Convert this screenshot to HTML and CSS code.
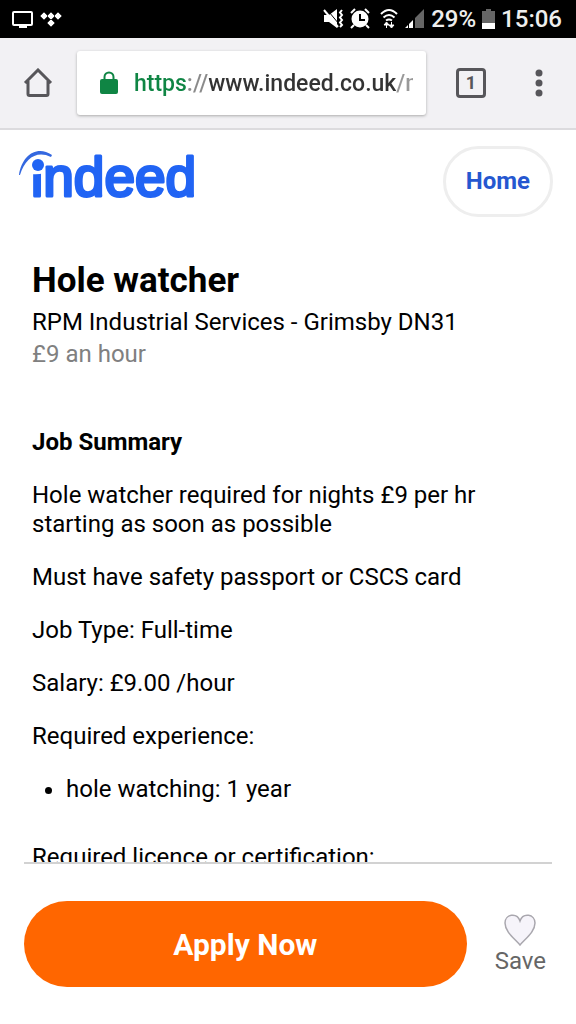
FILE: index.html
```html
<!DOCTYPE html>
<html lang="en-GB">
<head>
<meta charset="utf-8">
<meta name="viewport" content="width=device-width, initial-scale=1">
<title>Hole watcher - Indeed</title>
<link rel="stylesheet" href="styles.css">
</head>
<body>
<div class="status">
  <svg class="status-left" width="52" height="20" viewBox="0 0 52 20" aria-hidden="true">
    <rect x="1" y="3" width="19" height="13" rx="1" fill="none" stroke="#fff" stroke-width="2"/>
    <path d="M7 16h8v3H7z" fill="#fff"/>
    <path d="M32 3l4 4-4 4-4-4zM39 3l4 4-4 4-4-4zM46 3l4 4-4 4-4-4zM39 10l4 4-4 4-4-4z" fill="#fff" stroke="#000" stroke-width=".5"/>
  </svg>
  <div class="status-right">
    <svg width="102" height="22" viewBox="0 0 102 22" aria-hidden="true">
      <path d="M1 7h5l8-6v19l-8-6H1z" fill="#fff"/>
      <path d="M3.500 1L16 16" stroke="#000" stroke-width="1"/>
      <path d="M1 2l14 17" stroke="#fff" stroke-width="2"/>
      <path d="M19 2l-2 2.500 2 2.500-2 2.500 2 2.500-2 2.500 2 2.500-2 2" fill="none" stroke="#fff" stroke-width="2"/>
      <circle cx="37" cy="11" r="8.500" fill="#fff"/>
      <path d="M28 5l4-4M46 5l-4-4M31 17l-3 3M43 17l3 3" stroke="#fff" stroke-width="2"/>
      <path d="M37 6v6h5" fill="none" stroke="#000" stroke-width="2"/>
      <path d="M58 6q8-8 16 0M60.500 9.500q5.500-5 11 0M63 12.500q3-2 6 0" fill="none" stroke="#fff" stroke-width="2"/>
      <path d="M63.500 20v-3M61 17h5l-2.500-3zM68.500 14v3M66 17h5l-2.500 3z" stroke="#fff" fill="#fff"/>
      <path d="M92 10l9-9v19h-9z" fill="#666"/>
      <path d="M82 20l3-3v3zM86 16l4-4v8h-4z" fill="#fff"/>
    </svg>
    <span>29%</span>
    <svg class="battery" width="13" height="20" viewBox="0 0 13 20" aria-hidden="true">
      <path d="M4 0h5v2h4v12H0V2h4z" fill="#666"/><path d="M0 14h13v6H0z" fill="#fff"/>
    </svg>
    <span>15:06</span>
  </div>
</div>

<div class="toolbar">
  <button class="tool" aria-label="Home page">
    <svg width="30" height="30" viewBox="0 0 30 30"><path d="M2 15L15 2l13 13M5 13v13q0 1.500 1.500 1.500h17q1.500 0 1.500-1.500V13" fill="none" stroke="#57565a" stroke-width="3"/></svg>
  </button>
  <div class="address">
    <svg width="18" height="24" viewBox="0 0 18 24" aria-hidden="true"><rect y="8" width="18" height="15" rx="2" fill="#0f8544"/><path d="M4.500 9V6a4.500 4.500 0 0 1 9 0v3" fill="none" stroke="#0f8544" stroke-width="2"/></svg>
    <input class="url" type="text" aria-label="Address" value="https://www.indeed.co.uk/m">
  </div>
  <button class="tool tabs" aria-label="Open tabs"><span class="tab-count">1</span></button>
  <button class="tool" aria-label="Menu">
    <svg width="8" height="28" viewBox="0 0 8 28" fill="#57565a"><circle cx="4" cy="4" r="3.500"/><circle cx="4" cy="14" r="3.500"/><circle cx="4" cy="24" r="3.500"/></svg>
  </button>
</div>

<header class="site-header">
  <a class="logo" href="#">
    <svg width="180" height="60" viewBox="0 0 180 60">
      <text class="wordmark" x="12" y="50">indeed</text>
      <path d="M12 5h13v22q-6 2-13 1z" fill="#fff"/>
      <path d="M0 29C3 9 18-1 33 9L32 11C18 4 6 12 1 29z" fill="#3468e0"/>
      <circle cx="19" cy="19" r="6" fill="#2164f4"/>
    </svg>
  </a>
  <a class="home" href="#">Home</a>
</header>

<main class="job">
  <h1>Hole watcher</h1>
  <p class="meta">RPM Industrial Services - Grimsby DN31</p>
  <p class="meta pay">£9 an hour</p>
  <h2>Job Summary</h2>
  <p>Hole watcher required for nights £9 per hr starting as soon as possible</p>
  <p>Must have safety passport or CSCS card</p>
  <p>Job Type: Full-time</p>
  <p>Salary: £9.00 /hour</p>
  <p>Required experience:</p>
  <ul><li>hole watching: 1 year</li></ul>
  <p>Required licence or certification:</p>
</main>

<footer class="actions">
  <button class="apply">Apply Now</button>
  <button class="save">
    <svg width="34" height="34" viewBox="0 0 34 34" aria-hidden="true"><path d="M17 32C12 26 2 19 2 10 2 1 14-1 17 8 20-1 32 1 32 10c0 9-10 16-15 22z" fill="#f6f4fa" stroke="#a9a7ae" stroke-width="1.500"/></svg>
    <span>Save</span>
  </button>
</footer>
</body>
</html>
```
FILE: styles.css
```css
* { box-sizing: border-box; }
body {
  margin: 0;
  height: 100vh;
  display: flex;
  flex-direction: column;
  background: #fff;
  color: #000;
  font: 24px/29px Roboto, sans-serif;
}
button {
  border: 0;
  padding: 0;
  background: none;
  font: inherit;
  color: inherit;
}
svg { display: block; flex: none; }

.status {
  flex: none;
  height: 38px;
  padding: 0 14px 0 12px;
  display: flex;
  align-items: center;
  justify-content: space-between;
  background: #000;
  color: #eee;
  font-weight: 500;
}
.status-right { display: flex; align-items: center; gap: 6px; }

.toolbar {
  flex: none;
  height: 92px;
  padding: 0 22px 0 23px;
  display: flex;
  align-items: center;
  gap: 24px;
  background: #f2f1f4;
  border-bottom: 2px solid #dcdbde;
}
.tool { min-width: 30px; display: flex; justify-content: center; }
.tabs { margin-left: 6px; margin-right: 14px; }
.tab-count {
  width: 30px;
  height: 30px;
  border: 3px solid #57565a;
  border-radius: 4px;
  color: #57565a;
  font-size: 18px;
  font-weight: 700;
  line-height: 24px;
  text-align: center;
}
.address {
  flex: 1;
  min-width: 0;
  height: 64px;
  padding: 0 13px 0 23px;
  display: flex;
  align-items: center;
  gap: 16px;
  background: #fff;
  border-radius: 3px;
  box-shadow: 0 1px 3px #aaa;
}
.url {
  flex: 1;
  min-width: 0;
  border: 0;
  padding: 0;
  outline: 0;
  font: 500 23px/29px Roboto, sans-serif;
  color: transparent;
  caret-color: #333;
  background: linear-gradient(to right, #0f8544 53px, #8a8a8a 53px 75px, #333 75px 262px, #999 262px);
  -webkit-background-clip: text;
  background-clip: text;
}

.site-header {
  flex: none;
  height: 85px;
  padding: 16px 23px 0 19px;
  display: flex;
  align-items: flex-start;
  justify-content: space-between;
}
.wordmark {
  font: 400 55px "Liberation Sans", Arial, sans-serif;
  fill: #2164f4;
  stroke: #2164f4;
  stroke-width: 3px;
  stroke-linejoin: round;
}
.home {
  padding: 18px 20px;
  border: 3px solid #eee;
  border-radius: 36px;
  color: #2557d0;
  font-weight: 700;
  text-decoration: none;
}

.job {
  flex: 1;
  min-height: 0;
  overflow-y: auto;
  scrollbar-width: none;
  margin-top: 24px;
  padding: 20px 32px 0;
}
h1 { margin: 0 0 4px; font-size: 35px; line-height: 43px; }
h2 { margin: 58px 0 24px; font-size: 24px; line-height: 29px; }
p { margin: 0 0 24px; }
.meta { margin: 0; line-height: 32px; }
.pay { color: #808080; }
ul { margin: 0 0 39px; padding-left: 34px; }

.actions {
  flex: none;
  margin: 0 24px;
  padding: 37px 0;
  display: flex;
  align-items: center;
  border-top: 2px solid #d2d2d2;
}
.apply {
  flex: 1;
  height: 86px;
  border-radius: 43px;
  background: #ff6600;
  color: #fff;
  font-size: 30px;
  font-weight: 700;
}
.save {
  margin-left: 28px;
  margin-right: 6px;
  display: flex;
  flex-direction: column;
  align-items: center;
  color: #666;
}
```
